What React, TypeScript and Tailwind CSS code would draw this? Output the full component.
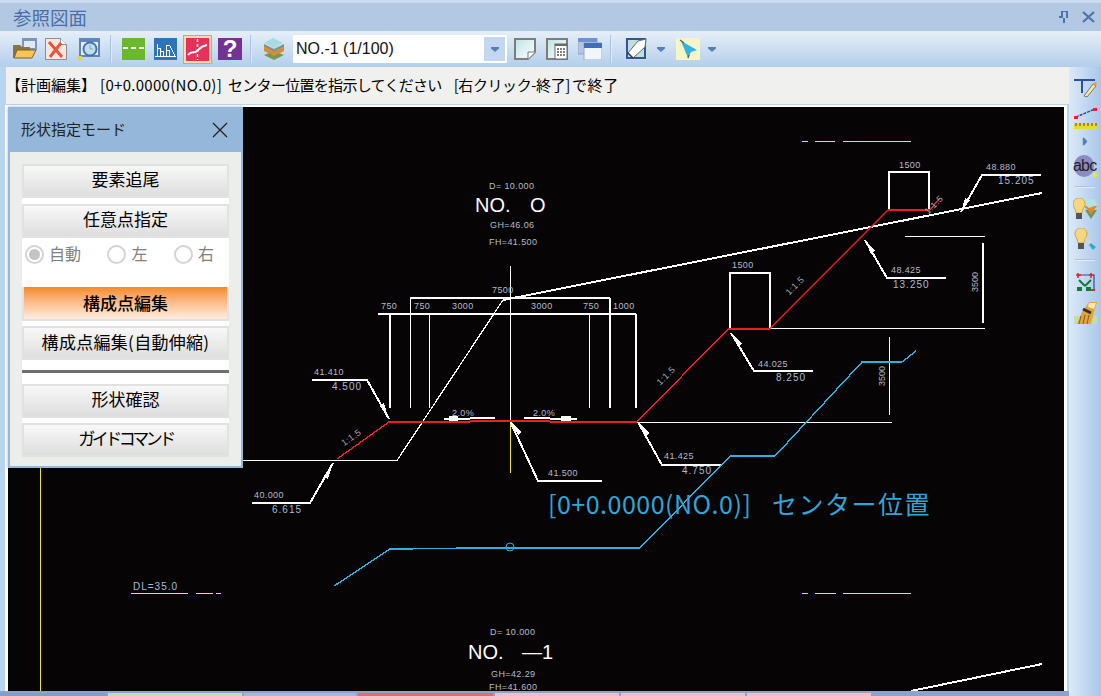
import React from 'react';

const JP = { fontFamily: '"Noto Sans CJK JP", sans-serif' };

function Sep() {
  return <div className="w-[2px] h-[28px] bg-gradient-to-r from-[#8fb0d8] to-[#ffffff]" />;
}

function Caret({ className = '' }: { className?: string }) {
  return (
    <svg width="8" height="5" viewBox="0 0 8 5" className={className}>
      <path d="M0 0h8v1.500L4 5 0 1.500z" fill="#5a7fb5" />
    </svg>
  );
}

function OpenIcon() {
  return (
    <svg width="24" height="22" viewBox="0 0 24 22">
      <rect x="9" y="0" width="15" height="12" fill="#7d95bb" />
      <rect x="11" y="3" width="11" height="7" fill="#dfe9f5" />
      <path d="M0 7h7l2 2h8v11H0z" fill="#8a7440" />
      <path d="M1 20l3-8h19l-4 8z" fill="#f4c65a" stroke="#7d6428" strokeWidth="1" />
    </svg>
  );
}

function CloseDocIcon() {
  return (
    <svg width="22" height="22" viewBox="0 0 22 22">
      <path d="M0.500 0.500h15l6 6v15H0.500z" fill="#f6e6e2" stroke="#8d8d8d" />
      <path d="M15.500 0.500v6h6" fill="#fff" stroke="#8d8d8d" />
      <path d="M4 4l13 15M16 5L5 19" stroke="#e8553a" strokeWidth="3" />
    </svg>
  );
}

function SearchIcon() {
  return (
    <svg width="22" height="22" viewBox="0 0 22 22">
      <rect x="1" y="0" width="21" height="19" fill="#5f86bd" />
      <rect x="3" y="4" width="17" height="13" fill="#e6f0f8" />
      <circle cx="12" cy="11" r="6.500" fill="#bfe0ea" stroke="#4b74ad" strokeWidth="2" />
      <path d="M12 7v4h3" stroke="#7ca9c9" fill="none" />
      <rect x="0" y="18" width="4" height="4" fill="#e7d43c" />
    </svg>
  );
}

function GreenIcon() {
  return (
    <svg width="23" height="22" viewBox="0 0 23 22">
      <rect width="23" height="22" fill="#6cb82c" />
      <path d="M1 10h5M9 10h5M17 10h5" stroke="#fff" strokeWidth="2" />
    </svg>
  );
}

function BlueIcon() {
  return (
    <svg width="23" height="22" viewBox="0 0 23 22" shapeRendering="crispEdges">
      <rect width="23" height="22" fill="#2f74b8" />
      <path d="M3.500 18V6M3.500 10H6.500V18M6.500 13H9.500V18M12.500 18V7H15.500L21 18M12.500 12H15.500V18" stroke="#fff" fill="none" />
      <path d="M1 18.500h21" stroke="#fff" />
    </svg>
  );
}

function RedIcon() {
  return (
    <div className="w-[29px] h-[29px] flex items-center justify-center bg-[#f9dcae] border border-[#c8a878]">
      <svg width="23" height="23" viewBox="0 0 23 23">
        <rect width="23" height="23" fill="#e8315a" />
        <path d="M2 17c4-5 6-1 9-4s4-5 10-6" stroke="#fff" strokeWidth="2" fill="none" />
        <path d="M11.500 1v21" stroke="#fff" strokeWidth="1.500" strokeDasharray="3 2" />
      </svg>
    </div>
  );
}

function HelpIcon() {
  return (
    <div className="w-[24px] h-[22px] bg-[#743294] flex items-center justify-center text-white font-bold text-[24px] leading-none" style={{ fontFamily: '"Liberation Sans", sans-serif' }}>
      ?
    </div>
  );
}

function LayersIcon() {
  return (
    <svg width="22" height="22" viewBox="0 0 22 22">
      <path d="M11 13l10 4-10 5-10-5z" fill="#6f9a55" />
      <path d="M1 9l10 5 10-5v4l-10 5-10-5z" fill="#df8a2e" />
      <path d="M1 6l10 5 10-5v3l-10 5-10-5z" fill="#8a8f78" />
      <path d="M10 0l10 5-9 5-10-5z" fill="#a5dbe4" />
    </svg>
  );
}

function DocIcon() {
  return (
    <svg width="22" height="22" viewBox="0 0 22 22">
      <defs>
        <linearGradient id="pg" x1="0" y1="0" x2="1" y2="1">
          <stop offset="0" stopColor="#bfe3e4" />
          <stop offset="1" stopColor="#ffffff" />
        </linearGradient>
      </defs>
      <path d="M1 1h20v13l-7 7H1z" fill="url(#pg)" stroke="#7d7d7d" strokeWidth="2" />
      <path d="M14 21v-7h7" fill="#fff" stroke="#7d7d7d" />
    </svg>
  );
}

function CalcIcon() {
  return (
    <svg width="22" height="22" viewBox="0 0 22 22">
      <rect x="1" y="1" width="20" height="20" fill="url(#pg)" stroke="#7d7d7d" strokeWidth="2" />
      <rect x="9" y="6" width="12" height="15" fill="#fff" stroke="#6a6a6a" />
      <rect x="9" y="6" width="12" height="2" fill="#6a6a6a" />
      <path d="M11 11h8M11 14h8M11 17h8" stroke="#555" strokeWidth="1.500" strokeDasharray="2 1" />
    </svg>
  );
}

function WindowsIcon() {
  return (
    <svg width="24" height="22" viewBox="0 0 24 22">
      <rect x="0" y="0" width="19" height="16" fill="#b6c6e2" stroke="#8ea3cc" />
      <rect x="0" y="0" width="19" height="4" fill="#6f93ce" />
      <rect x="6" y="5" width="18" height="17" fill="#f1f6fb" stroke="#9aa8c2" />
      <rect x="6" y="5" width="18" height="5" fill="#3f6fb5" />
    </svg>
  );
}

function PenIcon() {
  return (
    <svg width="22" height="22" viewBox="0 0 22 22">
      <rect width="22" height="22" fill="#c3e4d8" />
      <rect x="2" y="1" width="18" height="19" fill="#bfe0d8" stroke="#33529a" strokeWidth="2" />
      <path d="M3 15L13 3l8-2-1 8L8 20z" fill="#fff" stroke="#666" />
      <path d="M3 15l5 5" stroke="#333" strokeWidth="1.500" />
    </svg>
  );
}

function ArrowIcon() {
  return (
    <svg width="24" height="22" viewBox="0 0 24 22">
      <rect width="24" height="22" fill="#f5f5c8" />
      <path d="M5 3l16 9-6 2-3 6z" fill="#35b3e0" />
      <path d="M4 2l4 3M12 20l1-3" stroke="#666" strokeWidth="1.500" />
    </svg>
  );
}

function SideIcons() {
  return (
    <div className="w-[32px] flex flex-col items-center bg-gradient-to-r from-[#dde9f7] to-[#a9c7ea] pt-[12px]">
      <svg width="23" height="19" viewBox="0 0 23 19">
        <path d="M0 1h21M8 1v13" stroke="#2a4ea0" strokeWidth="2" fill="none" />
        <path d="M10 17l9-12 3 2-9 11z" fill="#f7e7a0" stroke="#777" />
        <path d="M19 5l3 2 1-3-2-1z" fill="#ef9a35" />
      </svg>
      <svg width="23" height="23" viewBox="0 0 23 23" className="mt-[9px]">
        <path d="M2 10L21 2" stroke="#2a4ea0" strokeWidth="1.500" strokeDasharray="3 1" />
        <path d="M0 9h4v3H0zM19 1h4v3h-4z" fill="#e8222a" />
        <rect x="0" y="16" width="23" height="6" fill="#ecd92f" />
        <path d="M2 16v3M6 16v3M10 16v3M14 16v3M18 16v3M22 16v3" stroke="#444" />
      </svg>
      <Caret className="mt-[9px] -rotate-90" />
      <div className="mt-[11px] relative w-[24px] h-[22px]">
        <div className="absolute left-[1px] top-0 w-[20px] h-[22px] rounded-full bg-[#8b8cc2]" />
        <div className="absolute right-0 bottom-0 w-[4px] h-[4px] bg-[#f1e04a]" />
        <span className="absolute left-0 top-[3px] text-[16px] leading-none tracking-[-0.8px] text-[#1f1f1f]" style={{ fontFamily: '"Liberation Sans", sans-serif' }}>abc</span>
      </div>
      <div className="mt-[9px] w-[20px] h-[2px] bg-gradient-to-b from-[#8fb0d8] to-[#ffffff]" />
      <svg width="24" height="22" viewBox="0 0 24 22" className="mt-[10px]">
        <path d="M12 12h12l-6 9z" fill="#6f9a55" />
        <path d="M11 8h13l-6 8z" fill="#df8a2e" />
        <path d="M12 1h9l3 6-8 3-4-3z" fill="#b6e2e4" />
        <path d="M6 0c4 0 6 3 6 6 0 3-3 5-3 9H3c0-4-3-6-3-9 0-3 2-6 6-6z" fill="#f6d680" stroke="#c9a850" />
        <rect x="3" y="15" width="6" height="6" fill="#555" />
      </svg>
      <svg width="23" height="22" viewBox="0 0 23 22" className="mt-[8px]">
        <path d="M7 0c4 0 6 3 6 6 0 3-3 5-3 9H4c0-4-3-6-3-9 0-3 2-6 6-6z" fill="#f6d680" stroke="#c9a850" />
        <rect x="4" y="15" width="6" height="6" fill="#555" />
        <path d="M13 9l9 10-3 3-8-11z" fill="#c6d8e4" />
        <path d="M17 15l5 4-3 3-4-5z" fill="#2fa8d8" />
      </svg>
      <div className="mt-[9px] w-[20px] h-[2px] bg-gradient-to-b from-[#8fb0d8] to-[#ffffff]" />
      <svg width="20" height="20" viewBox="0 0 20 20" className="mt-[11px]">
        <path d="M3 3h16v14" fill="none" stroke="#2a4ea0" strokeWidth="1.200" />
        <path d="M1 3h5M3 1v5M14 3h5M16 1v5" stroke="#e8222a" strokeWidth="1.500" />
        <rect x="16" y="17" width="4" height="2" fill="#e8222a" />
        <path d="M4 8l6 6M16 8l-6 6" stroke="#0f7a3a" strokeWidth="2" />
        <rect x="2" y="15" width="5" height="4" fill="#0f7a3a" />
        <rect x="11" y="15" width="5" height="4" fill="#0f7a3a" />
      </svg>
      <svg width="23" height="22" viewBox="0 0 23 22" className="mt-[10px]">
        <rect x="0" y="14" width="23" height="8" fill="#bfe0a8" />
        <path d="M8 10L15 0h8l-3 10 -3 12H3z" fill="#e2a53e" />
        <path d="M7 14l-2 8M11 13l-2 9M15 13l-2 9" stroke="#8a5a1a" />
        <path d="M9 7l8 4" stroke="#333" strokeWidth="3" />
        <path d="M15 1h7l-2 6-6-2z" fill="#f6e6b0" />
      </svg>
    </div>
  );
}

function PanelButton({ label, className = '' }: { label: string; className?: string }) {
  return (
    <div className={`h-[34px] flex items-center justify-center pb-[5px] text-[17px] text-black border-2 border-[#e2e2e2] bg-gradient-to-b from-[#f8f8f8] to-[#dedede] ${className}`}>
      {label}
    </div>
  );
}

function Radio({ label, checked = false }: { label: string; checked?: boolean }) {
  return (
    <div className="flex items-center gap-[5px] text-[16px] text-[#808080]">
      <div className="w-[19px] h-[19px] rounded-full border-2 border-[#d4d4d4] flex items-center justify-center bg-white">
        {checked && <div className="w-[11px] h-[11px] rounded-full bg-[#c4c4c4]" />}
      </div>
      <span className="-mt-[3px]">{label}</span>
    </div>
  );
}

function ModePanel() {
  return (
    <div className="absolute left-[8px] top-[107px] w-[235px] h-[361px] border-2 border-[#95b7da] bg-[#eceeec] flex flex-col shadow-[0_0_3px_rgba(0,0,0,0.3)]" style={JP}>
      <div className="h-[43px] bg-[#95b7da] flex items-center justify-between pl-[11px] pr-[13px] pb-[2px] text-[15px] text-[#222]">
        <span>形状指定モード</span>
        <svg width="16" height="16" viewBox="0 0 16 16">
          <path d="M1 1l14 14M15 1L1 15" stroke="#222" strokeWidth="1.300" />
        </svg>
      </div>
      <div className="mx-[12px] mt-[12px] bg-white flex flex-col">
        <PanelButton label="要素追尾" />
        <div className="h-[6px]" />
        <PanelButton label="任意点指定" />
        <div className="h-[33px] flex items-center justify-between pl-[3px] pr-[15px]">
          <Radio label="自動" checked />
          <Radio label="左" />
          <Radio label="右" />
        </div>
        <div className="h-[16px]" />
        <div className="border-2 border-[#e2e2e2] border-t-0">
          <div className="h-[32px] flex items-center justify-center text-[17px] font-medium text-black bg-gradient-to-b from-[#f58a20] to-[#fdeee0]">構成点編集</div>
        </div>
        <div className="h-[5px]" />
        <PanelButton label="構成点編集(自動伸縮)" className="tracking-[0.3px] !pb-[3px]" />
        <div className="h-[10px]" />
        <div className="h-[3px] bg-[#6f6f6f]" />
        <div className="h-[11px]" />
        <PanelButton label="形状確認" />
        <div className="h-[5px]" />
        <PanelButton label="ガイドコマンド" className="tracking-[-3.5px]" />
      </div>
    </div>
  );
}

const smallTexts: [string, number, number][] = [
  ['D= 10.000', 489, 189],
  ['GH=46.06', 490, 228],
  ['FH=41.500', 489, 245],
  ['7500', 492, 293],
  ['750', 381, 309],
  ['750', 414, 309],
  ['3000', 452, 309],
  ['3000', 531, 309],
  ['750', 583, 309],
  ['1000', 613, 309],
  ['2.0%', 452, 416],
  ['2.0%', 533, 416],
  ['1500', 732, 268],
  ['1500', 899, 168],
  ['48.880', 986, 170],
  ['48.425', 891, 273],
  ['44.025', 758, 367],
  ['41.410', 314, 375],
  ['40.000', 254, 498],
  ['41.500', 548, 476],
  ['41.425', 664, 459],
  ['D= 10.000', 490, 635],
  ['GH=42.29', 491, 677],
  ['FH=41.600', 489, 690],
];

const valueTexts: [string, number, number][] = [
  ['15.205', 998, 184],
  ['13.250', 893, 288],
  ['8.250', 776, 381],
  ['4.500', 332, 390],
  ['6.615', 272, 513],
  ['4.750', 682, 474],
  ['DL=35.0', 133, 590],
];

const slopeTexts: [number, number, number][] = [
  [353, 440, -35],
  [668, 378, -45],
  [797, 288, -45],
  [936, 207, -45],
];

function Drawing() {
  return (
    <svg width="1056" height="584" viewBox="8 107 1056 584" className="block" shapeRendering="crispEdges" style={{ fontFamily: '"Liberation Sans", sans-serif' }}>
      {/* yellow */}
      <g stroke="#f0e33a" strokeWidth="1" fill="none">
        <path d="M40.500 468V691M510.500 420V473" />
        <path d="M802 141.500h6M815 141.500h20M843 141.500h68" />
        <path d="M131 593.500h57M196 593.500h17M216 593.500h5" />
        <path d="M802 593.500h6M815 593.500h21M843 593.500h68" />
      </g>
      {/* ground */}
      <g stroke="#fff" fill="none">
        <path d="M243 460.500H397L503 300" strokeWidth="1.300" />
        <path d="M503 300L1042 193" strokeWidth="2" />
        <path d="M911 691L1042 664" strokeWidth="2" />
        <path d="M510.500 266V420" strokeWidth="1" />
        <path d="M410 298H610M378 314H636" strokeWidth="2" />
        <path d="M390 314V408M610 298V408M636 314V408" strokeWidth="2" />
        <path d="M410.500 298V408" strokeWidth="1.500" />
        <path d="M429.500 314V408M589.500 314V408" strokeWidth="1" />
        <path d="M730 328V273H770V328" strokeWidth="2" />
        <path d="M889 210V172H929V210" strokeWidth="2" />
        <path d="M637 422.500H892M770 328.500H985M905 236.500H985" strokeWidth="1" />
        <path d="M983 243V323" strokeWidth="2" />
        <path d="M889.500 337V415" strokeWidth="1" />
        {/* road marks */}
        <path d="M444 418.500H470M470 417.500H495M524 417.500H550M550 418.500H577" strokeWidth="2" />
      </g>
      <rect x="449" y="416" width="9" height="6" fill="#fff" />
      <rect x="561" y="416" width="10" height="6" fill="#fff" />
      {/* leaders */}
      <g stroke="#fff" fill="none" strokeWidth="2">
        <path d="M312 380H367L389 419" />
        <path d="M252 503H310L333 463" />
        <path d="M510 421L538 481H602" />
        <path d="M638 422L662 465H722" />
        <path d="M731 333L754 371H813" />
        <path d="M865 240L887 278H946" />
        <path d="M961 212L982 175H1041" />
      </g>
      <g fill="#fff">
        <path d="M389 420L380 406L384 403z" />
        <path d="M333 463L324 476L328 479z" />
        <path d="M510 421L518 435L522 432z" />
        <path d="M638 422L646 436L650 433z" />
        <path d="M731 333L738 347L742 344z" />
        <path d="M865 240L871 254L875 251z" />
        <path d="M961 212L965 198L970 200z" />
      </g>
      {/* red road */}
      <g stroke="#ee1c25" fill="none">
        <path d="M337 459L389 422H470M550 422H637L729 328M930 210L940 198" strokeWidth="1.400" />
        <path d="M770 328.500L888 210" strokeWidth="1.400" shapeRendering="geometricPrecision" />
        <path d="M470 421H550M729 328.500H770M888 210H930" strokeWidth="2" />
      </g>
      {/* blue line */}
      <g stroke="#2fb0e4" fill="none">
        <path d="M334 586L390 549H400L470 548H640L730 456H775L862 362H902L916 351" strokeWidth="1.400" />
        <circle cx="510" cy="547" r="4" strokeWidth="1" shapeRendering="geometricPrecision" />
      </g>
      {smallTexts.map(([t, x, y]) => (
        <text key={t + x + y} x={x} y={y} fontSize="9" letterSpacing="0.4" fill="#b4bccb">{t}</text>
      ))}
      {valueTexts.map(([t, x, y]) => (
        <text key={t + x + y} x={x} y={y} fontSize="10" letterSpacing="1" fill="#a9bcd6">{t}</text>
      ))}
      {slopeTexts.map(([x, y, r]) => (
        <text key={x} x={x} y={y} fontSize="9" letterSpacing="0.4" fill="#9fa8b8" textAnchor="middle" transform={`rotate(${r} ${x} ${y})`}>1:1.5</text>
      ))}
      <text x="978" y="282" fontSize="9" fill="#b4bccb" textAnchor="middle" transform="rotate(-90 978 282)">3500</text>
      <text x="885" y="376" fontSize="9" fill="#b4bccb" textAnchor="middle" transform="rotate(-90 885 376)">3500</text>
      <text x="475" y="212" fontSize="20" fill="#fff">NO.</text>
      <text x="530" y="212" fontSize="20" fill="#fff">O</text>
      <text x="468" y="659" fontSize="20" fill="#fff">NO.</text>
      <text x="522" y="659" fontSize="20" fill="#fff">—1</text>
      <text x="548" y="514" fontSize="25" fill="#2ea6d8" style={JP} letterSpacing="0.5">[0+0.0000(NO.0)]</text>
      <text x="772" y="514" fontSize="25" fill="#2ea6d8" style={JP} letterSpacing="1.500">センター位置</text>
    </svg>
  );
}

export default function App() {
  return (
    <div className="relative w-[1101px] h-[696px] overflow-hidden flex flex-col bg-[#b9d4ee]" style={JP}>
      {/* title */}
      <div className="h-[31px] shrink-0 flex items-center justify-between pl-[13px] pr-[5px] bg-[#b3c9e3] border-t-[3px] border-[#c9dbf1]">
        <span className="text-[18.500px] leading-none text-[#4a6ea6]">参照図面</span>
        <div className="flex items-center gap-[12px] pr-[1px]">
          <svg width="12" height="14" viewBox="0 0 12 14">
            <path d="M3 1h7v7H8V2H5v6H1V6h2zM5 8h2v5H5z" fill="#4f72a8" />
          </svg>
          <svg width="13" height="12" viewBox="0 0 13 12">
            <path d="M1 1l11 10M12 1L1 11" stroke="#4f72a8" strokeWidth="2.200" />
          </svg>
        </div>
      </div>
      {/* toolbar */}
      <div className="h-[36px] shrink-0 flex items-center pl-[13px] bg-gradient-to-b from-[#e6eff9] to-[#b3ceeb]">
        <OpenIcon />
        <div className="ml-[8px]"><CloseDocIcon /></div>
        <div className="ml-[11px]"><SearchIcon /></div>
        <div className="ml-[10px]"><Sep /></div>
        <div className="ml-[10px]"><GreenIcon /></div>
        <div className="ml-[9px]"><BlueIcon /></div>
        <div className="ml-[6px]"><RedIcon /></div>
        <div className="ml-[6px]"><HelpIcon /></div>
        <div className="ml-[8px]"><Sep /></div>
        <div className="ml-[11px]"><LayersIcon /></div>
        <div className="ml-[8px] w-[214px] h-[28px] bg-white flex items-center justify-between pl-[3px] pr-[2px]">
          <span className="text-[16px] text-[#111]" style={{ fontFamily: '"Liberation Sans", sans-serif' }}>NO.-1 (1/100)</span>
          <div className="w-[21px] h-[24px] flex items-center justify-center bg-[#c3d8f0]"><Caret /></div>
        </div>
        <div className="ml-[7px]"><DocIcon /></div>
        <div className="ml-[10px]"><CalcIcon /></div>
        <div className="ml-[10px]"><WindowsIcon /></div>
        <div className="ml-[8px]"><Sep /></div>
        <div className="ml-[13px]"><PenIcon /></div>
        <Caret className="ml-[10px]" />
        <div className="ml-[11px]"><ArrowIcon /></div>
        <Caret className="ml-[8px]" />
      </div>
      {/* body */}
      <div className="flex-1 flex min-h-0">
        <div className="w-[1069px] flex flex-col">
          <div className="h-[37px] ml-[6px] flex items-center bg-[#f0f0ee] text-[15px] text-black whitespace-pre">
            <span>【計画編集】</span>
            <span className="ml-[4px] tracking-[0.3px]">[0+0.0000(NO.0)]</span>
            <span className="ml-[6px] tracking-[-0.7px]">センター位置を指示してください</span>
            <span className="ml-[12px] tracking-[-0.4px]">[右クリック-終了]</span>
            <span className="ml-[2px] tracking-[0.6px]">で終了</span>
          </div>
          <div className="h-[1px] bg-[#b9d4ee]" />
          <div className="ml-[5px] mr-[2px] bg-white pl-[3px] pr-[3px] pt-[2px]">
            <div className="bg-[#060404] h-[584px] overflow-hidden">
              <Drawing />
            </div>
          </div>
          <div className="flex-1 flex pt-[2px] bg-[#8ba4cc]">
            <div className="w-[106px] bg-[#7f9fc9]" />
            <div className="w-[134px] ml-[2px] bg-[#c5dcbc]" />
            <div className="w-[112px] ml-[2px] bg-[#a9b5d9]" />
            <div className="w-[135px] ml-[2px] bg-[#e06c6c]" />
            <div className="w-[124px] ml-[2px] bg-[#f3c0c0]" />
            <div className="w-[124px] ml-[2px] bg-[#f3c0c0]" />
            <div className="w-[124px] ml-[2px] bg-[#f3c0c0]" />
          </div>
        </div>
        <SideIcons />
      </div>
      <ModePanel />
    </div>
  );
}
